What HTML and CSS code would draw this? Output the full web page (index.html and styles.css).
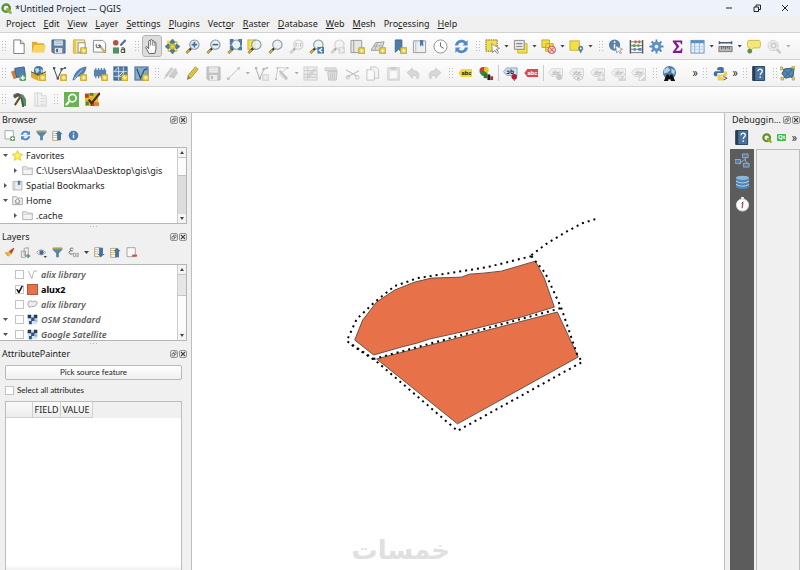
FILE: index.html
```html
<!DOCTYPE html>
<html lang="en">
<head>
    <meta charset="UTF-8">
    <meta name="viewport" content="width=device-width, initial-scale=1.0">
    <title>*Untitled Project — QGIS</title>
    <link rel="stylesheet" href="styles.css">
</head>
<body>

<!-- Icon set -->
<svg class="sprite" aria-hidden="true">
    <symbol id="star-badge" viewBox="0 0 16 16"><rect x="9" y="9" width="7" height="7" rx="1" fill="#d9be3c" stroke="#b89a1c" stroke-width=".6"/><path d="M12.5 10v5M10 12.5h5M10.8 10.8l3.4 3.4M14.2 10.8l-3.4 3.4" stroke="#fff6b8" stroke-width=".8"/></symbol>
    <symbol id="green-badge" viewBox="0 0 16 16"><rect x="9" y="9" width="7" height="7" rx="2" fill="#5d9e6b"/><path d="M12.5 10.2v4.6M10.2 12.5h4.6" stroke="#fff" stroke-width="1.5"/></symbol>
    <symbol id="lens" viewBox="0 0 16 16"><path d="M6.5 10L1.5 15" stroke="#333" stroke-width="2.4"/><path d="M4.8 11.6L1.5 15" stroke="#e0b93a" stroke-width="1.6"/><circle cx="10" cy="6" r="5" fill="#e9eef0" fill-opacity=".85" stroke="#87929a" stroke-width="1.1"/></symbol>
    <symbol id="qgis" viewBox="0 0 16 16"><circle cx="7.5" cy="7.5" r="5.3" fill="none" stroke="#589632" stroke-width="3.6"/><path d="M8 8h3l4.5 5v2.5h-3L8 11z" fill="#93b023"/><path d="M7.5 7.5l2.5.3L8 10z" fill="#ee7913"/></symbol>
    <symbol id="new" viewBox="0 0 16 16"><path d="M3 1h7l4 4v10.5H3z" fill="#fff" stroke="#777" /><path d="M10 1v4h4" fill="#ddd" stroke="#777"/></symbol>
    <symbol id="open" viewBox="0 0 16 16"><path d="M1 3h5l1 1.5h7V14H1z" fill="#e0ad2f"/><path d="M3.5 6.5H16L14 14H1z" fill="#fbd35f"/></symbol>
    <symbol id="save" viewBox="0 0 16 16"><path d="M1 1h14v14H2.5L1 13.5z" fill="#5c7d9d" stroke="#4b6782"/><rect x="3.5" y="1.5" width="9" height="5.5" fill="#e3eaf1"/><path d="M4.5 3h7M4.5 5h7" stroke="#8fa3b6" stroke-width=".8"/><rect x="4" y="9.5" width="8" height="5.5" fill="#dde3e8"/><rect x="5.5" y="10.5" width="2" height="3.5" fill="#46627c"/></symbol>
    <symbol id="layout-new" viewBox="0 0 16 16"><path d="M1.5 1h12v14h-12z" fill="#f6e9b5" stroke="#c6a42d"/><rect x="1.5" y="1" width="3" height="14" fill="#e7c84c"/><path d="M6.5 4H14v10H6.5z" fill="#fff" stroke="#888"/><use href="#star-badge"/></symbol>
    <symbol id="layouts" viewBox="0 0 16 16"><path d="M1.5 1.5h10l3 3V14h-13z" fill="#fafafa" stroke="#8b8b8b"/><path d="M7 6l7.5 8.5" stroke="#777" stroke-width="2"/><path d="M9.5 8.8l5 5.5" stroke="#e3c14a" stroke-width="1.6"/><path d="M5 5.500a2.300 2.300 0 1 0 4 1" fill="none" stroke="#777" stroke-width="1.300"/></symbol>
    <symbol id="style" viewBox="0 0 16 16"><circle cx="4" cy="4" r="3" fill="#b5533c"/><path d="M9 7l5.5-6" stroke="#4f6f94" stroke-width="2.2"/><rect x="1" y="9" width="6.5" height="6.5" fill="#509062"/><circle cx="11.5" cy="12.7" r="1.8" fill="none" stroke="#444" stroke-width="1.1"/><path d="M10 9.800c2-.9 3.500-.3 3.500 1.200v4" fill="none" stroke="#444" stroke-width="1.1"/></symbol>
    <symbol id="hand" viewBox="0 0 16 16"><path d="M5.500 15.500L2 9.500c-.6-1.200.7-1.900 1.500-.9L5 10.500V2.500c0-1.300 1.800-1.300 1.900 0V1.500C7 .3 8.800.3 8.900 1.500v1c.1-1.100 1.800-1 1.900.2v1.200c.2-1 1.900-.9 1.900.4V11l-1.200 4.500z" fill="#fff" stroke="#555"/><path d="M6.900 3v4M8.900 3v4M10.800 4v3.500" stroke="#666" stroke-width=".8"/></symbol>
    <symbol id="pan" viewBox="0 0 16 16"><path d="M2 1.500h7v5H2z" fill="#f0df4b"/><path d="M8 0l3 3.500-1.500 1.500h-3L5 3.500zM8 16l3-3.500-1.500-1.500h-3L5 12.500zM0 8l3.500-3L5 6.500v3L3.500 11zM16 8l-3.500-3L11 6.500v3l1.500 1.500z" fill="#4e7c95" stroke="#3b6077" stroke-width=".5"/><path d="M6 6h4v4H6zM11 2.500l2 2M3 11.500l2 2M11 13.500l2-2" fill="#f0df4b" stroke="#d1bd35" stroke-width="1.800"/></symbol>
    <symbol id="zoom-in" viewBox="0 0 16 16"><use href="#lens"/><path d="M10 3v6M7 6h6" stroke="#416e9d" stroke-width="1.800"/></symbol>
    <symbol id="zoom-out" viewBox="0 0 16 16"><use href="#lens"/><path d="M7 6h6" stroke="#416e9d" stroke-width="1.800"/></symbol>
    <symbol id="zoom-full" viewBox="0 0 16 16"><use href="#lens"/><path d="M3 0h4v2l-2 2v2H3zM16 0h-4v2l2 2v3h2zM3 11V7h2l2 2v2zM16 12h-4v-2l2-2h2z" fill="#4a79a8"/></symbol>
    <symbol id="zoom-sel" viewBox="0 0 16 16"><rect x="1" y="1" width="8" height="10" fill="#f2e14c" stroke="#c3b232"/><use href="#lens"/></symbol>
    <symbol id="zoom-native" viewBox="0 0 16 16"><use href="#lens"/><path d="M7.500 4v4M12.500 4v4M10 4.500v.8M10 6.800v.8" stroke="#444"/></symbol>
    <symbol id="zoom-last" viewBox="0 0 16 16"><use href="#lens"/><rect x="9" y="8.500" width="7" height="7" fill="#4a79a8"/><path d="M14 10l-3 2 3 2" fill="none" stroke="#fff" stroke-width="1.300"/></symbol>
    <symbol id="zoom-next" viewBox="0 0 16 16"><use href="#lens"/><rect x="9" y="8.500" width="7" height="7" fill="#aaa"/><path d="M11 10l3 2-3 2" fill="none" stroke="#fff" stroke-width="1.300"/></symbol>
    <symbol id="map-new" viewBox="0 0 16 16"><path d="M1 1.500h11.500v13H1z" fill="#e6e6e6" stroke="#999"/><path d="M4 1.500v13" stroke="#999"/><use href="#star-badge"/></symbol>
    <symbol id="map3d" viewBox="0 0 16 16"><path d="M0 12l5-8 9-1-3 9z" fill="#ddd" stroke="#999"/><path d="M3 8l9-1M7 4l-3 8" stroke="#aaa"/><use href="#star-badge"/></symbol>
    <symbol id="mark-new" viewBox="0 0 16 16"><path d="M3.500 1h7v13L7 11l-3.500 3z" fill="#4d7ba9" stroke="#3d658c"/><use href="#star-badge"/></symbol>
    <symbol id="marks" viewBox="0 0 16 16"><path d="M1.500 2h13v12.500h-13z" fill="#eee" stroke="#999"/><path d="M4 2v12.500" stroke="#bbb"/><path d="M8.500 1H12v7l-1.700-1.500L8.500 8z" fill="#4d7ba9"/></symbol>
    <symbol id="clock" viewBox="0 0 16 16"><circle cx="8" cy="8" r="7" fill="#fff" stroke="#909090"/><path d="M8 3.500V8l3.500 2" fill="none" stroke="#666"/></symbol>
    <symbol id="refresh" viewBox="0 0 16 16"><path d="M1 7C2 1 9-1 13 3l1.500-2v6H9l2-2C8 2.500 5 4 4.500 7zM15 9c-1 6-8 8-12 4l-1.500 2V9H7l-2 2c3 2.500 6 1 6.500-2z" fill="#4f8bc5"/></symbol>
    <symbol id="select" viewBox="0 0 16 16"><rect x="1" y="1" width="12" height="12" fill="#f5df47" stroke="#555" stroke-dasharray="1.500 1"/><path d="M7 5l8.500 5-3.500 1 2.500 3.500-1.500 1-2.500-3.500L8 14.500z" fill="#fff" stroke="#777" stroke-width=".8"/></symbol>
    <symbol id="select-form" viewBox="0 0 16 16"><path d="M5 5h10v10H5z" fill="#f5df47" stroke="#c7b22f"/><path d="M1.500 1.500H12V11H1.500z" fill="#e9e9e9" stroke="#888"/><path d="M3.500 5H10M3.500 8H10" stroke="#888" stroke-width="1.300"/></symbol>
    <symbol id="deselect" viewBox="0 0 16 16"><path d="M1 1h8v8H1zM5 5h8v8H5z" fill="#f5df47" stroke="#b9a629"/><circle cx="11.500" cy="11.500" r="4" fill="#f1d7d2" stroke="#cd4a40"/><path d="M9 9l5 5M14 9l-5 5" stroke="#cd4a40"/></symbol>
    <symbol id="select-loc" viewBox="0 0 16 16"><rect x="1" y="2" width="10" height="10" fill="#f5df47" stroke="#c7b22f"/><path d="M12.500 15.500L10 11a2.700 2.700 0 1 1 5 0z" fill="#5883ab"/><circle cx="12.500" cy="10" r="1" fill="#fff"/></symbol>
    <symbol id="identify" viewBox="0 0 16 16"><circle cx="7" cy="6.500" r="6" fill="#5682af"/><path d="M7 5.500V10M7 2.500v1.700" stroke="#fff" stroke-width="1.700"/><path d="M8 7l7.500 4-3 1 2 3-1.300.8-2-3-2 2z" fill="#fff" stroke="#777" stroke-width=".7"/></symbol>
    <symbol id="abacus" viewBox="0 0 16 16"><path d="M1.500 1v14.500M14.500 1v14.500" stroke="#555" stroke-width="1.500"/><path d="M1 3h14M1 7h14M1 11h14M1 14.500h14" stroke="#666" stroke-width=".9"/><g stroke-width="3"><path d="M6 3h2M10 3h2" stroke="#c85148"/><path d="M4 7h3M9 7h2" stroke="#5ba060"/><path d="M5 11h2M10 11h3" stroke="#4e83b6"/></g></symbol>
    <symbol id="gear" viewBox="0 0 16 16"><path d="M8 .5v15M.5 8h15M2.700 2.700l10.600 10.600M13.300 2.700L2.700 13.300" stroke="#5788b9" stroke-width="2"/><circle cx="8" cy="8" r="5.200" fill="#5f93c5"/><circle cx="8" cy="8" r="2" fill="#e7eff7"/></symbol>
    <symbol id="sum" viewBox="0 0 16 16"><path d="M3 1.500h10v4h-1.300L11 3.500H6.500L10 8l-4 4.500h5l1-2.500h1.300l-.5 4.800H3V13.500L7 8.300 3 3z" fill="#86168c"/></symbol>
    <symbol id="table" viewBox="0 0 16 16"><rect x="1" y="1.500" width="14" height="13.500" fill="#eaf1f7" stroke="#6894bd"/><rect x="1" y="1.500" width="14" height="3" fill="#5c90c2"/><path d="M5 4v11M10 4v11" stroke="#8db0cf"/><path d="M1 8h14M1 11h14" stroke="#bed1e2"/></symbol>
    <symbol id="ruler" viewBox="0 0 16 16"><path d="M1 4h14M1.500 2.500v3M14.500 2.500v3" stroke="#465c75" stroke-width="1.500"/><rect x="1" y="8" width="14" height="5.500" fill="#b9b9b9" stroke="#777"/><path d="M4 8v3M6 8v2M8 8v3M10 8v2M12 8v3" stroke="#444" stroke-width=".8"/></symbol>
    <symbol id="tip" viewBox="0 0 16 16"><path d="M3 1.500h11c2 0 2 8 0 8H8L4 13V9.500H3c-2 0-2-8 0-8z" fill="#f5e67b" stroke="#cdb947"/><circle cx="4" cy="13" r="2.500" fill="#588e4e"/></symbol>
    <symbol id="find" viewBox="0 0 16 16"><circle cx="6.500" cy="7" r="5.500" fill="#ddd" stroke="#999"/><circle cx="7" cy="7" r="2.500" fill="none" stroke="#888" stroke-width="1.500"/><path d="M10.500 11l4 4" stroke="#888" stroke-width="2.500"/></symbol>

    <symbol id="source" viewBox="0 0 16 16"><path d="M0 6l9-4 2 9-8 3z" fill="#cf7d3d"/><path d="M4 2.500L14 1l1.500 10-9.500 1z" fill="#517fae" stroke="#3a6087"/><use href="#green-badge"/></symbol>
    <symbol id="geopkg" viewBox="0 0 16 16"><path d="M0 6l8 4v6l-8-4z" fill="#e4a92c"/><path d="M8 10l8-4v5l-8 5z" fill="#f0c54d"/><circle cx="8" cy="5" r="5" fill="#3f76a6"/><path d="M4 3l4-1 1 3-3 3zM10 3l3 2-2 3z" fill="#bcd7e2"/><path d="M0 6l8 4 8-4" fill="none" stroke="#544819"/><use href="#star-badge"/></symbol>
    <symbol id="vector" viewBox="0 0 16 16"><path d="M2 2.500l4 11 4.500-10L14 2" fill="none" stroke="#555" stroke-width="1.100"/><path d="M1 1h2.500v2.500H1zM5 12h2.500v2.500H5zM9 2h2.500v2.500H9zM13 1h2v2h-2z" fill="#555"/><use href="#star-badge"/></symbol>
    <symbol id="feather" viewBox="0 0 16 16"><path d="M1 15C3 7 7 2 15 1c-.5 5-3 9-9 10L2 15z" fill="#4d82b4" stroke="#39658e" stroke-width=".7"/><path d="M2 14l9-10" stroke="#b8d0e5"/><use href="#star-badge"/></symbol>
    <symbol id="chip" viewBox="0 0 16 16"><path d="M3 2v11M6 2v11M9 2v11M12 2v11" stroke="#4e749a" stroke-width="1.200"/><rect x="1" y="4" width="13" height="7" fill="#5582af"/><use href="#star-badge"/></symbol>
    <symbol id="mesh" viewBox="0 0 16 16"><rect x="1" y="1" width="14" height="14" fill="#507ca7" stroke="#33587c"/><path d="M1 6h14M1 11h14M6 1v14M11 1v14M1 6l5-5M6 11l5-5" stroke="#dce8f2" stroke-width=".9"/><use href="#star-badge"/></symbol>
    <symbol id="virtual" viewBox="0 0 16 16"><rect x="1" y="1" width="14" height="14" fill="#87abc9" stroke="#40698d"/><path d="M3 3l4 10 4-9 3-1" fill="none" stroke="#244f77" stroke-width="1.300"/><use href="#star-badge"/></symbol>
    <symbol id="pencils" viewBox="0 0 16 16"><path d="M2 11l7-9M6 12l7-9M9 13l5-7" stroke="#9b8888" stroke-width="3"/><path d="M0 14l3-4" stroke="#777"/></symbol>
    <symbol id="pencil" viewBox="0 0 16 16"><path d="M3 10.500L11 1l3 2.500L6 13z" fill="#ecd53f" stroke="#8c7a22" stroke-width=".8"/><path d="M3 10.500L2 15l4-2z" fill="#8b794c"/><path d="M5 11l7.500-8.500" stroke="#a28f29" stroke-width=".7"/></symbol>
    <symbol id="line" viewBox="0 0 16 16"><path d="M3 13L13 3" stroke="#777"/><path d="M1 12h3v3H1zM12 1h3v3h-3z" fill="#888"/></symbol>
    <symbol id="vertex" viewBox="0 0 16 16"><path d="M1 2h14M3 2L1 14M13 2L5 9l7 6" fill="none" stroke="#888"/><path d="M5 5l8 9" stroke="#777" stroke-width="2.500"/><path d="M2 1h2v2H2zM12 1h2v2h-2zM0 13h2v2H0z" fill="#777"/></symbol>
    <symbol id="modify" viewBox="0 0 16 16"><rect x="1" y="1" width="14" height="14" fill="#ddd" stroke="#999"/><path d="M1 5h14M1 9h14M1 12h14M5 1v14" stroke="#888"/><path d="M5 12l8-9" stroke="#999" stroke-width="3"/></symbol>
    <symbol id="trash" viewBox="0 0 16 16"><path d="M1 2h12v3H1z" fill="#bbb" stroke="#888"/><path d="M4 6h10l-1 9H5z" fill="#d5bcbc" stroke="#a66"/><path d="M7 7v7M9 7v7M11 7v7M3 5h12" stroke="#a77"/></symbol>
    <symbol id="cut" viewBox="0 0 16 16"><path d="M1 4l12 7M2 12l13-7" stroke="#777" stroke-width="1.300"/><circle cx="13" cy="12" r="2" fill="none" stroke="#777"/><circle cx="3" cy="12" r="1.800" fill="none" stroke="#777"/></symbol>
    <symbol id="copy" viewBox="0 0 16 16"><path d="M6 1h6l2.500 3v9H6z" fill="#eee" stroke="#777"/><path d="M2 4h6l2 2v9H2z" fill="#fff" stroke="#777"/></symbol>
    <symbol id="paste" viewBox="0 0 16 16"><rect x="2" y="2" width="12" height="13" fill="#ccc" stroke="#888"/><path d="M5 1h6v3H5z" fill="#888"/><path d="M4.500 5.500h7V13h-7z" fill="#fff"/></symbol>
    <symbol id="undo" viewBox="0 0 16 16"><path d="M1 7l6-5v3c6-1 9 5 5 9-1-4-2-4-5-4v3z" fill="#aaa" stroke="#777" stroke-width=".7"/></symbol>
    <symbol id="redo" viewBox="0 0 16 16"><path d="M15 7L9 2v3C3 4 0 10 4 14c1-4 2-4 5-4v3z" fill="#aaa" stroke="#777" stroke-width=".7"/></symbol>
    <symbol id="diagram" viewBox="0 0 16 16"><circle cx="4.500" cy="5" r="4" fill="#cf3a30"/><path d="M6 1c4-1 6 3 3 7L5 5z" fill="#e5c92c"/><path d="M1 6l4-1 4 3c-1 4-7 4-8-2z" fill="#2f8b3c"/><path d="M5 8h4v5H5z" fill="#2c7437"/><path d="M9 9h3v6H9z" fill="#222"/><path d="M12 11h3v4h-3z" fill="#ad302a"/></symbol>
    <symbol id="tag" viewBox="0 0 16 16"><path d="M4 3h11.500v8H4L.5 7z" fill="#eee" stroke="#888" stroke-width=".8"/><path d="M4 9h2.500V6.500H4M7.500 4.500V9H10V6.500H7.500M13.500 6.500H11V9h2.500" fill="none" stroke="#555" stroke-width=".9"/></symbol>
    <symbol id="tag-pin" viewBox="0 0 16 16"><use href="#tag"/><circle cx="12" cy="12" r="3" fill="#888"/></symbol>
    <symbol id="tag-eye" viewBox="0 0 16 16"><use href="#tag"/><path d="M5 13q5-5 10 0-5 4-10 0z" fill="#fff" stroke="#777"/><circle cx="10" cy="13" r="1.500" fill="#777"/></symbol>
    <symbol id="tag-move" viewBox="0 0 16 16"><use href="#tag"/><path d="M8 8h8v8H8z" fill="#aaa"/><path d="M12 9v6M9 12h6" stroke="#fff"/></symbol>
    <symbol id="tag-turn" viewBox="0 0 16 16"><use href="#tag"/><path d="M8 8h8v8H8z" fill="#aaa"/><path d="M10 13a2.500 2.500 0 1 1 3 1" fill="none" stroke="#fff"/></symbol>
    <symbol id="tag-edit" viewBox="0 0 16 16"><use href="#tag"/><path d="M8 8h8v8H8z" fill="#aaa"/><path d="M9.500 14.500l5-5" stroke="#fff" stroke-width="2"/></symbol>
    <symbol id="tag-blue" viewBox="0 0 16 16"><path d="M4 2h11v8H4L.5 6z" fill="#cfe0f0" stroke="#6e9ac2" stroke-width=".8"/><path d="M4 8h2.500V5.500H4M8.500 3.500V8H11V5.500H8.500" fill="none" stroke="#223" stroke-width="1"/><circle cx="12" cy="11.500" r="3" fill="#a92334"/><path d="M12 14v2" stroke="#555"/></symbol>
    <symbol id="globe-find" viewBox="0 0 16 16"><circle cx="8" cy="7" r="7" fill="#497ba8"/><path d="M2 4l4-3 3 3-3 3-4 1zM10 2l4 3-1 4-3-2z" fill="#b6cede"/><path d="M2 16l3-7h2l1 2 1-2h2l3 7h-4.500l-.5-2h-2l-.5 2z" fill="#111"/></symbol>
    <symbol id="python" viewBox="0 0 16 16"><path d="M8 1c-4 0-3.500 2-3.500 3.500H8V5.500H3C0 5.500 0 11 3 11h1.500V9c0-1 .5-1.500 1.500-1.500h4c1 0 1.500-.5 1.500-1.500V3C11.500 1.500 10.500 1 8 1z" fill="#3b73a5"/><path d="M8 15.500c4 0 3.500-2 3.500-3.500H8v-1h5c3 0 3-5.500 0-5.500h-1v2c0 1-.5 1.500-1.500 1.500h-4C5.500 9 5 9.500 5 10.500v3c0 1.500 1 2 3 2z" fill="#f4cd42"/><path d="M11 11l4 2-4 2" fill="none" stroke="#555"/></symbol>
    <symbol id="help" viewBox="0 0 16 16"><path d="M2 .5h12.500v15H2z" fill="#47739e" stroke="#273f56"/><path d="M1.500.5h3v15h-3z" fill="#293c50"/><path d="M7.500 5.500c0-3 4.500-2.500 4.500 0 0 2-2.200 2-2.200 4M9.800 11v1.700" fill="none" stroke="#fff" stroke-width="1.300"/></symbol>
    <symbol id="topology" viewBox="0 0 16 16"><path d="M2 8l3-5 10-1-1 9-8 2z" fill="#5186b2" stroke="#325c80"/><path d="M2 2l12 12M14 2L3 14" stroke="#4b6473"/><path d="M0 1h3v3H0zM13 0h3v3h-3zM1 12h3v3H1zM13 12h3v3h-3z" fill="#e5d86d" stroke="#807632" stroke-width=".5"/></symbol>

    <symbol id="hammer" viewBox="0 0 16 16"><path d="M1 3l4-2 7 2 3 5v7h-3l-1-7-3-3z" fill="#5f8b6b"/><path d="M3 14l6-9" stroke="#65521c" stroke-width="2.200"/><path d="M1 4l6-3 3 3-4 1-3 2z" fill="#555"/><path d="M10 6l2 10" stroke="#3a5b43" stroke-width="2"/></symbol>
    <symbol id="plan" viewBox="0 0 16 16"><path d="M2 1h7v3h5v11H2z" fill="#eee" stroke="#999"/><path d="M5 1v14M8 7h4M8 10h4M8 13h4" stroke="#999"/></symbol>
    <symbol id="green-find" viewBox="0 0 16 16"><rect width="16" height="16" fill="#68b450"/><circle cx="9" cy="6.500" r="4" fill="none" stroke="#fff" stroke-width="1.700"/><path d="M6 9.500L2 14" stroke="#fff" stroke-width="2.400"/></symbol>
    <symbol id="painter" viewBox="0 0 16 16"><rect y="1" width="14" height="14" fill="#e5bd2b"/><path d="M0 2h4v4H0zM6 11h4v4H6z" fill="#bd3c2d"/><path d="M5 1h4v3H5zM1 10h3v4H1z" fill="#468743"/><path d="M4 8l3 4L16 1" fill="none" stroke="#4b2c16" stroke-width="2.300"/><path d="M10 11h5v4h-5z" fill="#e87a2f"/></symbol>

    <symbol id="add" viewBox="0 0 16 16"><path d="M1.500 1h12v12h-12z" fill="#fff" stroke="#888"/><use href="#green-badge"/></symbol>
    <symbol id="filter" viewBox="0 0 16 16"><path d="M1 1h14v3l-5 5v6H6V9L1 4z" fill="#5684ad"/><path d="M1 1h14v2.500H1z" fill="#a9a453"/></symbol>
    <symbol id="collapse" viewBox="0 0 16 16"><path d="M1 2h8v13H1z" fill="#fff" stroke="#a5863a"/><path d="M1 5h7M1 8h7M1 11h7" stroke="#c1a960"/><path d="M10 1l5.500 5H13v9H7.500V6H5z" fill="#4b7198"/></symbol>
    <symbol id="expand" viewBox="0 0 16 16"><path d="M1 1h8v13H1z" fill="#fff" stroke="#a5863a"/><path d="M1 4h7M1 7h7M1 10h7" stroke="#c1a960"/><path d="M10 15l5.500-5H13V1H7.500v9H5z" fill="#4b7198"/></symbol>
    <symbol id="info" viewBox="0 0 16 16"><circle cx="8" cy="8" r="7" fill="#4d7eb0"/><path d="M8 7v5M8 3.500v2" stroke="#fff" stroke-width="2"/></symbol>
    <symbol id="brush" viewBox="0 0 16 16"><path d="M1 8l7-2 3 4-5 4z" fill="#e5b842"/><path d="M7 6l4 4 4-8-1-1z" fill="#b94a31"/><path d="M2 9l4 4" stroke="#b4822b"/></symbol>
    <symbol id="group" viewBox="0 0 16 16"><path d="M2 15V6h6v9zM6 12V2l6-1v11z" fill="#eee" stroke="#888"/><path d="M12 10v6M9 13h6" stroke="#5a9767" stroke-width="2"/></symbol>
    <symbol id="eye" viewBox="0 0 16 16"><path d="M1 8q6-8 13 0-7 7-13 0z" fill="#fff" stroke="#777"/><circle cx="8" cy="8" r="3.200" fill="#416b97"/><path d="M11 13h5l-2.500 3z" fill="#444"/></symbol>
    <symbol id="epsilon" viewBox="0 0 16 16"><path d="M8 3C6 0 1 2 4 5.500 0 6 1 12 7 10M4 5.500h3" fill="none" stroke="#555" stroke-width="1.300"/><path d="M8 9h3v5H8zM13 9h2v5h-2z" fill="none" stroke="#888"/></symbol>
    <symbol id="remove" viewBox="0 0 16 16"><path d="M1.500 1h12v13h-12z" fill="#f8f8f8" stroke="#888"/><path d="M9 12.500h7" stroke="#d34b43" stroke-width="3"/></symbol>
    <symbol id="star" viewBox="0 0 16 16"><path d="M8 .8l2.200 4.900 5.300.6-4 3.500 1.200 5.300L8 12.400l-4.700 2.700 1.200-5.300-4-3.500 5.300-.6z" fill="#fdf05a" stroke="#d8b91f"/></symbol>
    <symbol id="folder" viewBox="0 0 16 16"><path d="M1 2.500h5.500L8 4.500h7V14H1z" fill="#f3f3f3" stroke="#999"/><path d="M2 6h12" stroke="#bbb"/></symbol>
    <symbol id="home" viewBox="0 0 16 16"><path d="M1 2.500h5.500L8 4.500h7V14H1z" fill="#f3f3f3" stroke="#888"/><path d="M4 9l4-3.500L12 9M5.500 8.500V12h5V8.500" fill="none" stroke="#666"/></symbol>
    <symbol id="vec-layer" viewBox="0 0 16 16"><path d="M2 3l5 11 3-11h5" fill="none" stroke="#999"/></symbol>
    <symbol id="poly-layer" viewBox="0 0 16 16"><path d="M2 4q3-3 6 0 4-3 7 1-1 5-5 6-3-1-7 1-3-4-1-8z" fill="#eee" stroke="#888"/></symbol>
    <symbol id="raster" viewBox="0 0 16 16"><rect x="1" y="1" width="14" height="14" fill="#d9e5ee"/><path d="M1 1h5v5H1zM10 1h5v5h-5z" fill="#273e5a"/><path d="M6 5h5v5H6zM3 10h4v5H3z" fill="#32557c"/><path d="M11 8h4v3h-4z" fill="#8eafc8"/></symbol>
    <symbol id="network" viewBox="0 0 16 16"><path d="M11 4v5M4 12l6-5 4 5" fill="none" stroke="#9eb0c1"/><path d="M8 1h6v4H8zM0 7h6v4H0zM9 11h6v4H9z" fill="#4f7aa5" stroke="#aebfce" stroke-width=".8"/></symbol>
    <symbol id="database" viewBox="0 0 16 16"><path d="M1 3v10q7 4 14 0V3z" fill="#4f86b5"/><ellipse cx="8" cy="3" rx="7" ry="2.300" fill="#8db7d7"/><path d="M1 6.500q7 4 14 0M1 10q7 4 14 0" fill="none" stroke="#c3d9e9"/></symbol>
    <symbol id="gauge" viewBox="0 0 16 16"><circle cx="8" cy="8.500" r="6.500" fill="#fff" stroke="#ddd"/><path d="M6.500 0h3v2h-3z" fill="#eee"/><path d="M7.500 12l1-6" stroke="#c33" stroke-width="1.200"/><path d="M7 7l2-2" stroke="#333"/></symbol>
    <symbol id="float" viewBox="0 0 16 16"><rect x="1" y="1" width="14" height="14" rx="3" fill="#eee" stroke="#777" stroke-width="1.500"/><path d="M4 7h5v5H4zM7 7V4h5v5H9" fill="none" stroke="#666" stroke-width="1.500"/></symbol>
    <symbol id="close" viewBox="0 0 16 16"><rect x="1" y="1" width="14" height="14" rx="3" fill="#eee" stroke="#777" stroke-width="1.500"/><path d="M4 4l8 8M12 4l-8 8" stroke="#444" stroke-width="2.200"/></symbol>
</svg>

<header class="titlebar">
    <svg class="logo"><use href="#qgis"/></svg>
    <span class="app-title">*Untitled Project — QGIS</span>
    <div class="window-buttons">
        <button aria-label="Minimize"><svg viewBox="0 0 10 10"><path d="M2 5h6"/></svg></button>
        <button aria-label="Restore"><svg viewBox="0 0 10 10"><path d="M2 4h4.500v4.500H2zM4 4V2h4.500v4.500h-2"/></svg></button>
        <button aria-label="Close window"><svg viewBox="0 0 10 10"><path d="M2 2l6 6M8 2L2 8"/></svg></button>
    </div>
</header>

<nav class="menubar">
    <a href="#">Pro<u>j</u>ect</a>
    <a href="#"><u>E</u>dit</a>
    <a href="#"><u>V</u>iew</a>
    <a href="#"><u>L</u>ayer</a>
    <a href="#"><u>S</u>ettings</a>
    <a href="#"><u>P</u>lugins</a>
    <a href="#">Vect<u>o</u>r</a>
    <a href="#"><u>R</u>aster</a>
    <a href="#"><u>D</u>atabase</a>
    <a href="#"><u>W</u>eb</a>
    <a href="#"><u>M</u>esh</a>
    <a href="#">Pro<u>c</u>essing</a>
    <a href="#"><u>H</u>elp</a>
</nav>

<div class="toolbar toolbar-project">
    <div class="group">
        <i class="handle"></i>
        <button class="tool" aria-label="New project"><svg><use href="#new"/></svg></button>
        <button class="tool" aria-label="Open project"><svg><use href="#open"/></svg></button>
        <button class="tool" aria-label="Save project"><svg><use href="#save"/></svg></button>
        <button class="tool" aria-label="New print layout"><svg><use href="#layout-new"/></svg></button>
        <button class="tool" aria-label="Layout manager"><svg><use href="#layouts"/></svg></button>
        <button class="tool" aria-label="Style manager"><svg><use href="#style"/></svg></button>
    </div>
    <div class="group">
        <i class="handle"></i>
        <button class="tool pressed" aria-label="Pan map"><svg><use href="#hand"/></svg></button>
        <button class="tool" aria-label="Pan to selection"><svg><use href="#pan"/></svg></button>
        <button class="tool" aria-label="Zoom in"><svg><use href="#zoom-in"/></svg></button>
        <button class="tool" aria-label="Zoom out"><svg><use href="#zoom-out"/></svg></button>
        <button class="tool" aria-label="Zoom full"><svg><use href="#zoom-full"/></svg></button>
        <button class="tool" aria-label="Zoom to selection"><svg><use href="#zoom-sel"/></svg></button>
        <button class="tool" aria-label="Zoom to layer"><svg><use href="#lens"/></svg></button>
        <button class="tool off" aria-label="Zoom to native resolution"><svg><use href="#zoom-native"/></svg></button>
        <button class="tool" aria-label="Zoom last"><svg><use href="#zoom-last"/></svg></button>
        <button class="tool off" aria-label="Zoom next"><svg><use href="#zoom-next"/></svg></button>
        <button class="tool" aria-label="New map view"><svg><use href="#map-new"/></svg></button>
        <button class="tool" aria-label="New 3D map view"><svg><use href="#map3d"/></svg></button>
        <button class="tool" aria-label="New bookmark"><svg><use href="#mark-new"/></svg></button>
        <button class="tool" aria-label="Show bookmarks"><svg><use href="#marks"/></svg></button>
        <button class="tool" aria-label="Temporal controller"><svg><use href="#clock"/></svg></button>
        <button class="tool" aria-label="Refresh"><svg><use href="#refresh"/></svg></button>
    </div>
    <div class="group">
        <i class="handle"></i>
        <button class="tool" aria-label="Select features"><svg><use href="#select"/></svg></button><i class="arrow"></i>
        <button class="tool" aria-label="Select by value"><svg><use href="#select-form"/></svg></button><i class="arrow"></i>
        <button class="tool" aria-label="Deselect"><svg><use href="#deselect"/></svg></button><i class="arrow"></i>
        <button class="tool" aria-label="Select by location"><svg><use href="#select-loc"/></svg></button><i class="arrow"></i>
    </div>
    <div class="group">
        <i class="handle"></i>
        <button class="tool" aria-label="Identify"><svg><use href="#identify"/></svg></button>
        <button class="tool" aria-label="Field calculator"><svg><use href="#abacus"/></svg></button>
        <button class="tool" aria-label="Toolbox"><svg><use href="#gear"/></svg></button>
        <button class="tool" aria-label="Statistics"><svg><use href="#sum"/></svg></button>
        <button class="tool" aria-label="Attribute table"><svg><use href="#table"/></svg></button><i class="arrow"></i>
        <button class="tool" aria-label="Measure"><svg><use href="#ruler"/></svg></button><i class="arrow"></i>
        <button class="tool" aria-label="Map tips"><svg><use href="#tip"/></svg></button>
        <button class="tool off" aria-label="Actions"><svg><use href="#find"/></svg></button><i class="arrow off"></i>
    </div>
</div>

<div class="toolbar toolbar-edit">
    <div class="group">
        <i class="handle"></i>
        <button class="tool" aria-label="Data source manager"><svg><use href="#source"/></svg></button>
        <button class="tool" aria-label="New GeoPackage"><svg><use href="#geopkg"/></svg></button>
        <button class="tool" aria-label="New shapefile"><svg><use href="#vector"/></svg></button>
        <button class="tool" aria-label="New SpatiaLite layer"><svg><use href="#feather"/></svg></button>
        <button class="tool" aria-label="New scratch layer"><svg><use href="#chip"/></svg></button>
        <button class="tool" aria-label="New mesh layer"><svg><use href="#mesh"/></svg></button>
        <button class="tool" aria-label="New virtual layer"><svg><use href="#virtual"/></svg></button>
    </div>
    <div class="group">
        <i class="handle"></i>
        <button class="tool off" aria-label="Current edits"><svg><use href="#pencils"/></svg></button>
        <button class="tool" aria-label="Toggle editing"><svg><use href="#pencil"/></svg></button>
        <button class="tool off" aria-label="Save edits"><svg><use href="#save"/></svg></button>
        <button class="tool off" aria-label="Digitize"><svg><use href="#line"/></svg></button><i class="arrow off"></i>
        <button class="tool off" aria-label="Add feature"><svg><use href="#vector"/></svg></button>
        <button class="tool off" aria-label="Vertex tool"><svg><use href="#vertex"/></svg></button><i class="arrow off"></i>
        <button class="tool off" aria-label="Modify attributes"><svg><use href="#modify"/></svg></button>
        <button class="tool off" aria-label="Delete selected"><svg><use href="#trash"/></svg></button>
        <button class="tool off" aria-label="Cut"><svg><use href="#cut"/></svg></button>
        <button class="tool off" aria-label="Copy"><svg><use href="#copy"/></svg></button>
        <button class="tool off" aria-label="Paste"><svg><use href="#paste"/></svg></button>
        <button class="tool off" aria-label="Undo"><svg><use href="#undo"/></svg></button>
        <button class="tool off" aria-label="Redo"><svg><use href="#redo"/></svg></button>
    </div>
    <div class="group">
        <i class="handle"></i>
        <button class="tool" aria-label="Labeling"><span class="abc abc-yellow">abc</span></button>
        <button class="tool" aria-label="Diagrams"><svg><use href="#diagram"/></svg></button>
        <i class="divider"></i>
        <button class="tool" aria-label="Pinned labels"><svg><use href="#tag-blue"/></svg></button>
        <button class="tool" aria-label="Unplaced labels"><span class="abc abc-red">abc</span></button>
        <i class="divider"></i>
        <button class="tool off" aria-label="Pin label"><svg><use href="#tag-pin"/></svg></button>
        <button class="tool off" aria-label="Show label"><svg><use href="#tag-eye"/></svg></button>
        <button class="tool off" aria-label="Move label"><svg><use href="#tag-move"/></svg></button>
        <button class="tool off" aria-label="Rotate label"><svg><use href="#tag-turn"/></svg></button>
        <button class="tool off" aria-label="Change label"><svg><use href="#tag-edit"/></svg></button>
    </div>
    <div class="group catalog">
        <i class="handle"></i>
        <button class="tool" aria-label="Search catalog"><svg><use href="#globe-find"/></svg></button>
        <span class="more">»</span>
    </div>
    <div class="group">
        <i class="handle"></i>
        <button class="tool" aria-label="Python console"><svg><use href="#python"/></svg></button>
        <span class="more">»</span>
    </div>
    <div class="group">
        <i class="handle"></i>
        <button class="tool" aria-label="Help contents"><svg><use href="#help"/></svg></button>
    </div>
    <div class="group">
        <i class="handle"></i>
        <button class="tool" aria-label="Topology checker"><svg><use href="#topology"/></svg></button>
    </div>
</div>

<div class="toolbar toolbar-plugins">
    <div class="group">
        <i class="handle"></i>
        <button class="tool" aria-label="Build"><svg><use href="#hammer"/></svg></button>
        <button class="tool off" aria-label="Plan"><svg><use href="#plan"/></svg></button>
    </div>
    <div class="group">
        <i class="handle"></i>
        <button class="tool" aria-label="Quick search"><svg><use href="#green-find"/></svg></button>
        <button class="tool" aria-label="Attribute painter"><svg><use href="#painter"/></svg></button>
    </div>
</div>

<main class="workspace">
    <aside class="dock">
        <section class="panel">
            <div class="panel-title">
                <h2>Browser</h2>
                <button aria-label="Float browser"><svg><use href="#float"/></svg></button>
                <button aria-label="Close browser"><svg><use href="#close"/></svg></button>
            </div>
            <div class="panel-tools">
                <button aria-label="Add layers"><svg><use href="#add"/></svg></button>
                <button aria-label="Refresh browser"><svg><use href="#refresh"/></svg></button>
                <button aria-label="Filter browser"><svg><use href="#filter"/></svg></button>
                <button aria-label="Collapse all"><svg><use href="#collapse"/></svg></button>
                <button aria-label="Properties"><svg><use href="#info"/></svg></button>
            </div>
            <div class="list-box">
                <ul class="tree">
                    <li><i class="twist open"></i><svg><use href="#star"/></svg>Favorites</li>
                    <li class="child"><i class="twist"></i><svg><use href="#folder"/></svg>C:\Users\Alaa\Desktop\gis\gis</li>
                    <li><i class="twist"></i><svg><use href="#marks"/></svg>Spatial Bookmarks</li>
                    <li><i class="twist open"></i><svg><use href="#home"/></svg>Home</li>
                    <li class="child"><i class="twist"></i><svg><use href="#folder"/></svg>.cache</li>
                </ul>
                <div class="scrollbar"><i class="up"></i><div class="track"><div class="thumb"></div></div><i class="down"></i></div>
            </div>
        </section>
        <div class="splitter"></div>

        <section class="panel">
            <div class="panel-title">
                <h2>Layers</h2>
                <button aria-label="Float layers"><svg><use href="#float"/></svg></button>
                <button aria-label="Close layers"><svg><use href="#close"/></svg></button>
            </div>
            <div class="panel-tools">
                <button aria-label="Layer styling"><svg><use href="#brush"/></svg></button>
                <button aria-label="Add group"><svg><use href="#group"/></svg></button>
                <button aria-label="Map themes"><svg><use href="#eye"/></svg></button>
                <button aria-label="Filter legend"><svg><use href="#filter"/></svg></button>
                <button aria-label="Filter by expression"><svg><use href="#epsilon"/></svg></button>
                <i class="arrow"></i>
                <button aria-label="Expand all layers"><svg><use href="#expand"/></svg></button>
                <button aria-label="Collapse all layers"><svg><use href="#collapse"/></svg></button>
                <button aria-label="Remove layer"><svg><use href="#remove"/></svg></button>
            </div>
            <div class="list-box">
                <ul class="tree layers">
                    <li><i class="twist none"></i><label><input type="checkbox"><svg><use href="#vec-layer"/></svg>alix library</label></li>
                    <li class="shown"><i class="twist none"></i><label><input type="checkbox" checked><span class="swatch"></span>alux2</label></li>
                    <li><i class="twist none"></i><label><input type="checkbox"><svg><use href="#poly-layer"/></svg>alix library</label></li>
                    <li><i class="twist open"></i><label><input type="checkbox"><svg><use href="#raster"/></svg>OSM Standard</label></li>
                    <li><i class="twist open"></i><label><input type="checkbox"><svg><use href="#raster"/></svg>Google Satellite</label></li>
                </ul>
                <div class="scrollbar"><i class="up"></i><div class="track"><div class="thumb"></div></div><i class="down"></i></div>
            </div>
        </section>
        <div class="splitter"></div>

        <section class="panel painter">
            <div class="panel-title">
                <h2>AttributePainter</h2>
                <button aria-label="Float painter"><svg><use href="#float"/></svg></button>
                <button aria-label="Close painter"><svg><use href="#close"/></svg></button>
            </div>
            <button class="pick">Pick source feature</button>
            <label class="select-all"><input type="checkbox">Select all attributes</label>
            <div class="table-box">
                <table>
                    <thead>
                        <tr><th></th><th>FIELD</th><th>VALUE</th><th></th></tr>
                    </thead>
                </table>
            </div>
        </section>
    </aside>

    <section class="map">
        <svg viewBox="192 113 533 457" role="img" aria-label="Map of parcels">
            <g class="parcel">
                <path d="M355 340L363 320 377 302 395 290 415 282 432 278 462 277 470 274 484 273 502 271 536 261 545 278 555 307 522 317 462 332 430 339 418 343 402 347 374 355z"/>
                <path d="M377 359L558 312 579 357 458 424z"/>
            </g>
            <g class="boundary">
                <path d="M532 256L488 267 418 278 395 286 375 302 357 319 347 341 374 359"/>
                <path d="M352 345L376 361"/>
                <path d="M532 256L546 273 562 308 578 355 583 362 458 431 374 359 562 308"/>
                <path d="M532 255L548 243 568 231 583 223 599 218"/>
            </g>
        </svg>
        <span class="watermark" lang="ar">خمسات</span>
    </section>

    <aside class="debug">
        <div class="panel-title">
            <h2>Debuggin...</h2>
            <button aria-label="Float debugging"><svg><use href="#float"/></svg></button>
            <button aria-label="Close debugging"><svg><use href="#close"/></svg></button>
        </div>
        <div class="debug-tools">
            <button class="tool" aria-label="Debug help"><svg><use href="#help"/></svg></button>
            <div class="debug-extra">
                <svg><use href="#qgis"/></svg>
                <span class="qt">Qt</span>
                <span class="more">»</span>
            </div>
        </div>
        <div class="debug-body">
            <div class="rail">
                <button class="tool" aria-label="Network logger"><svg><use href="#network"/></svg></button>
                <button class="tool" aria-label="Query logger"><svg><use href="#database"/></svg></button>
                <button class="tool" aria-label="Profiler"><svg><use href="#gauge"/></svg></button>
            </div>
            <div class="debug-page"></div>
        </div>
    </aside>
</main>

</body>
</html>
```
FILE: styles.css
```css
* {
    box-sizing: border-box;
}

body {
    margin: 0;
    height: 100vh;
    overflow: hidden;
    display: flex;
    flex-direction: column;
    background: #f0f0f0;
    color: #1c1c1c;
    font-family: "Noto Sans", "Open Sans", sans-serif;
    font-size: 9px;
    line-height: 15px;
}

button {
    border: none;
    background: none;
    padding: 0;
    font: inherit;
    color: inherit;
    display: flex;
    align-items: center;
    justify-content: center;
}

.sprite {
    position: absolute;
    width: 0;
    height: 0;
}

/* title bar and menu */
.titlebar {
    display: flex;
    align-items: center;
    height: 16px;
    padding: 0 10px 0 1px;
    background: #eef2fb;
}

.logo {
    width: 11px;
    height: 11px;
    margin-right: 3px;
}

.app-title {
    flex: 1;
}

.window-buttons {
    display: flex;
    gap: 18px;
}

.window-buttons svg {
    width: 10px;
    height: 10px;
    fill: none;
    stroke: #222;
}

.menubar {
    display: flex;
    gap: 8px;
    height: 16px;
    padding: 0 6px;
}

.menubar a {
    color: inherit;
    text-decoration: none;
}

/* toolbars */
.toolbar {
    display: grid;
    height: 27px;
    background: linear-gradient(#fdfdfd, #f1f1f1);
    border-top: 1px solid #d2d2d2;
}

.toolbar-project {
    grid-template-columns: 128fr 336fr 118fr 193fr;
    gap: 5px;
    padding: 0 9px 0 1px;
}

.toolbar-edit {
    grid-template-columns: 149fr 289fr 200fr 46fr 36fr 26fr 25fr;
    gap: 4px;
    padding: 0 3px 0 1px;
}

.toolbar-plugins {
    display: flex;
    gap: 4px;
    height: 26px;
    padding: 0 1px;
}

.toolbar-plugins .group {
    gap: 3px;
}

.group {
    display: flex;
    align-items: center;
    justify-content: space-between;
    min-width: 0;
}

.handle {
    width: 6px;
    height: 13px;
    background: radial-gradient(circle, #bbb 30%, transparent 40%) 0 0 / 3px 3px;
}

.tool {
    width: 18px;
    height: 20px;
    flex-shrink: 0;
}

.tool svg {
    width: 15px;
    height: 15px;
}

.tool.pressed {
    background: #dcdcdc;
    outline: 1px solid #b4b4b4;
    border-radius: 2px;
}

.off {
    filter: grayscale(1);
    opacity: .4;
}

.arrow {
    width: 5px;
    height: 3px;
    flex-shrink: 0;
    background: #444;
    clip-path: polygon(0 0, 100% 0, 50% 100%);
}

.divider {
    width: 1px;
    height: 16px;
    background: #ccc;
}

.catalog {
    justify-content: flex-start;
    gap: 3px;
}

.catalog .more {
    margin-left: auto;
}

.more {
    font-family: Roboto, sans-serif;
    font-size: 12px;
    line-height: 14px;
}

.abc {
    width: 14px;
    font-family: Roboto, sans-serif;
    font-size: 6px;
    line-height: 8px;
    font-weight: 700;
    text-align: right;
    padding-right: 1px;
    clip-path: polygon(3px 0, 100% 0, 100% 100%, 3px 100%, 0 50%);
}

.abc-yellow {
    background: #ecd93b;
}

.abc-red {
    color: #fff;
    background: #dc4a4f;
}

/* docks */
.workspace {
    flex: 1;
    min-height: 0;
    display: flex;
    border-top: 1px solid #c4c4c4;
}

.dock {
    width: 192px;
    flex-shrink: 0;
    display: flex;
    flex-direction: column;
    padding-right: 4px;
    border-right: 1px solid #bdbdbd;
}

.panel-title {
    display: flex;
    align-items: center;
    gap: 1px;
    height: 13px;
    padding: 0 0 0 2px;
}

.panel-title h2 {
    flex: 1;
    min-width: 0;
    margin: 0;
    font-size: 9px;
    font-weight: 400;
}

.panel-title svg {
    width: 8px;
    height: 8px;
}

.panel-tools {
    display: flex;
    align-items: center;
    gap: 5px;
    height: 21px;
    padding: 0 4px 2px;
}

.panel-tools svg {
    width: 11px;
    height: 11px;
}

.list-box {
    display: flex;
    height: 77px;
    background: #fff;
    border: 1px solid #b5b5b5;
    border-left: none;
}

.tree {
    flex: 1;
    margin: 0;
    padding: 0;
    list-style: none;
    overflow: hidden;
    white-space: nowrap;
}

.tree li,
.tree label {
    display: flex;
    align-items: center;
    height: 15px;
}

.tree li {
    padding-left: 3px;
}

.tree .child {
    padding-left: 13px;
}

.tree svg {
    width: 11px;
    height: 11px;
    margin-right: 3px;
}

.twist {
    width: 5px;
    height: 5px;
    margin-right: 4px;
    background: #555;
    clip-path: polygon(20% 0, 80% 50%, 20% 100%);
}

.twist.open {
    clip-path: polygon(0 20%, 100% 20%, 50% 80%);
}

.twist.none {
    visibility: hidden;
}

.layers {
    padding-top: 2px;
    color: #5d5d5d;
    font-weight: 600;
    font-style: italic;
}

.layers .twist {
    margin-right: 7px;
}

.layers .shown {
    color: #000;
    font-weight: 700;
    font-style: normal;
}

.swatch {
    width: 11px;
    height: 11px;
    margin-right: 3px;
    background: #e77148;
    border: 1px solid #a9583c;
}

input[type="checkbox"] {
    appearance: none;
    width: 9px;
    height: 9px;
    margin: 0 3px 0 0;
    background: #fff;
    border: 1px solid #c3c3c3;
}

input[type="checkbox"]:checked {
    display: grid;
    place-items: center;
}

input[type="checkbox"]:checked::before {
    content: "";
    width: 7px;
    height: 7px;
    background: #111;
    clip-path: polygon(0 45%, 25% 45%, 40% 68%, 78% 0, 100% 0, 50% 100%, 32% 100%);
}

.scrollbar {
    width: 9px;
    display: flex;
    flex-direction: column;
    align-items: center;
    border-left: 1px solid #ccc;
    background: #f4f4f4;
}

.scrollbar i {
    width: 4px;
    height: 3px;
    margin: 3px 0;
    background: #444;
}

.scrollbar .up {
    clip-path: polygon(50% 0, 100% 100%, 0 100%);
}

.scrollbar .down {
    clip-path: polygon(0 0, 100% 0, 50% 100%);
}

.track {
    flex: 1;
    align-self: stretch;
    background: #dcdcdc;
}

.thumb {
    height: 33%;
    background: #fbfbfb;
    border: solid #c4c4c4;
    border-width: 1px 0;
}

.layers + .scrollbar .track {
    background: #fbfbfb;
}

.layers + .scrollbar .thumb {
    height: 38%;
    background: #e6e6e6;
}

.splitter {
    height: 6px;
    width: 10px;
    margin: 0 auto;
    background: radial-gradient(circle, #bbb 30%, transparent 40%) 0 1px / 3px 3px repeat-x;
}

/* attribute painter */
.painter {
    flex: 1;
    display: flex;
    flex-direction: column;
}

.pick {
    margin: 5px 5px 0;
    height: 15px;
    flex-shrink: 0;
    font-family: Lato, sans-serif;
    font-size: 8px;
    background: linear-gradient(#fff, #f0f0f0);
    border: 1px solid #b9b9b9;
    border-radius: 2px;
}

.select-all {
    display: flex;
    align-items: center;
    height: 21px;
    padding-left: 5px;
    font-family: Lato, sans-serif;
    font-size: 8px;
}

.table-box {
    flex: 1;
    margin: 0 5px;
    background: linear-gradient(to top, #f0f0f0, #fff 5px);
    border: 1px solid #bdbdbd;
    border-bottom: none;
}

table {
    width: 100%;
    border-collapse: collapse;
    background: #f0f0f0;
}

th {
    height: 15px;
    padding: 0 0 0 2px;
    font-weight: 400;
    text-align: left;
    border-right: 1px solid #d0d0d0;
    border-bottom: 1px solid #d0d0d0;
    background: linear-gradient(#fafafa, #ececec);
}

th:first-child {
    width: 26px;
}

th:nth-child(2) {
    width: 28px;
}

th:nth-child(3) {
    width: 32px;
}

th:last-child {
    border: none;
    background: none;
}

/* map canvas */
.map {
    flex: 1;
    min-width: 0;
    position: relative;
    background: #fff;
    border-right: 1px solid #bdbdbd;
}

.map svg {
    display: block;
    width: 100%;
    height: 100%;
}

.parcel {
    fill: #e77148;
    stroke: #6b5148;
    stroke-width: 1;
}

.boundary {
    fill: none;
    stroke: #000;
    stroke-width: 2;
    stroke-dasharray: 2 4;
}

.watermark {
    position: absolute;
    left: 30%;
    bottom: 4px;
    color: #e0e0e0;
    font-family: "DejaVu Sans", sans-serif;
    font-size: 26px;
    line-height: 32px;
    font-weight: 700;
}

/* debugging dock */
.debug {
    width: 75px;
    flex-shrink: 0;
    display: flex;
    flex-direction: column;
    padding-left: 5px;
}

.debug-tools {
    display: flex;
    align-items: center;
    justify-content: space-between;
    height: 23px;
    padding: 0 3px 0 2px;
}

.debug-extra {
    display: flex;
    align-items: center;
    gap: 5px;
}

.debug-extra svg {
    width: 10px;
    height: 10px;
}

.qt {
    padding: 0 1px;
    font-size: 6px;
    line-height: 7px;
    font-weight: 700;
    color: #fff;
    background: #41b74c;
    border-radius: 1px;
}

.debug-body {
    flex: 1;
    display: flex;
    gap: 2px;
}

.rail {
    width: 24px;
    display: flex;
    flex-direction: column;
    align-items: center;
    gap: 2px;
    padding-top: 1px;
    background: #5c5c5c;
}

.debug-page {
    flex: 1;
    border: 1px solid #bdbdbd;
    border-bottom: none;
}
```
